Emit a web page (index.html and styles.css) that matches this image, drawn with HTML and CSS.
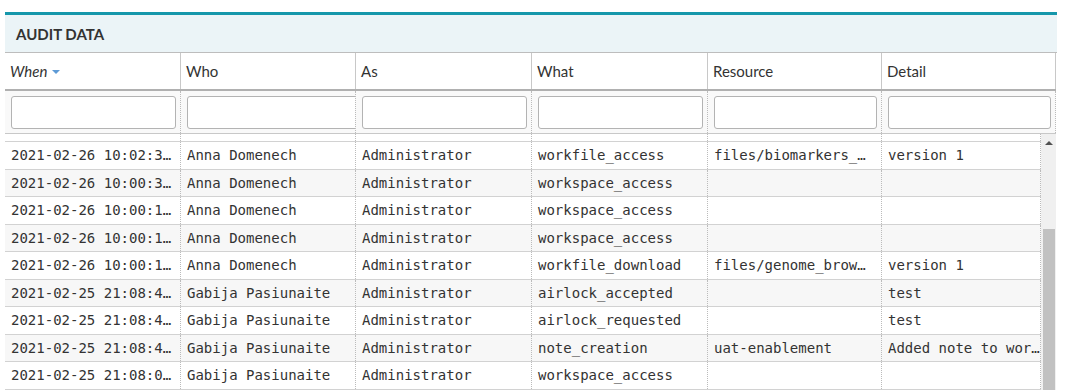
FILE: index.html
```html
<!DOCTYPE html>
<html>
<head>
<meta charset="utf-8">
<link rel="stylesheet" href="styles.css">
</head>
<body>
<div class="panel">
  <div class="title">AUDIT DATA</div>
  <div class="grid head">
    <div class="hcell"><span class="when">When</span><span class="caret"></span></div>
    <div class="hcell">Who</div>
    <div class="hcell">As</div>
    <div class="hcell">What</div>
    <div class="hcell">Resource</div>
    <div class="hcell">Detail</div>
  </div>
  <div class="grid filters">
    <div class="fcell"><input type="text" class="finput"></div>
    <div class="fcell wide"><input type="text" class="finput"></div>
    <div class="fcell"><input type="text" class="finput"></div>
    <div class="fcell"><input type="text" class="finput"></div>
    <div class="fcell"><input type="text" class="finput"></div>
    <div class="fcell"><input type="text" class="finput"></div>
  </div>
  <div class="body">
    <div class="rows">
      <div class="grid row partial"><div class="cell"></div><div class="cell"></div><div class="cell"></div><div class="cell"></div><div class="cell"></div><div class="cell"></div></div>
      <div class="grid row"><div class="cell">2021-02-26 10:02:3…</div><div class="cell">Anna Domenech</div><div class="cell">Administrator</div><div class="cell">workfile_access</div><div class="cell">files/biomarkers_…</div><div class="cell">version 1</div></div>
      <div class="grid row alt"><div class="cell">2021-02-26 10:00:3…</div><div class="cell">Anna Domenech</div><div class="cell">Administrator</div><div class="cell">workspace_access</div><div class="cell"></div><div class="cell"></div></div>
      <div class="grid row"><div class="cell">2021-02-26 10:00:1…</div><div class="cell">Anna Domenech</div><div class="cell">Administrator</div><div class="cell">workspace_access</div><div class="cell"></div><div class="cell"></div></div>
      <div class="grid row alt"><div class="cell">2021-02-26 10:00:1…</div><div class="cell">Anna Domenech</div><div class="cell">Administrator</div><div class="cell">workspace_access</div><div class="cell"></div><div class="cell"></div></div>
      <div class="grid row"><div class="cell">2021-02-26 10:00:1…</div><div class="cell">Anna Domenech</div><div class="cell">Administrator</div><div class="cell">workfile_download</div><div class="cell">files/genome_brow…</div><div class="cell">version 1</div></div>
      <div class="grid row alt"><div class="cell">2021-02-25 21:08:4…</div><div class="cell">Gabija Pasiunaite</div><div class="cell">Administrator</div><div class="cell">airlock_accepted</div><div class="cell"></div><div class="cell">test</div></div>
      <div class="grid row"><div class="cell">2021-02-25 21:08:4…</div><div class="cell">Gabija Pasiunaite</div><div class="cell">Administrator</div><div class="cell">airlock_requested</div><div class="cell"></div><div class="cell">test</div></div>
      <div class="grid row alt"><div class="cell">2021-02-25 21:08:4…</div><div class="cell">Gabija Pasiunaite</div><div class="cell">Administrator</div><div class="cell">note_creation</div><div class="cell">uat-enablement</div><div class="cell">Added note to wor…</div></div>
      <div class="grid row"><div class="cell">2021-02-25 21:08:0…</div><div class="cell">Gabija Pasiunaite</div><div class="cell">Administrator</div><div class="cell">workspace_access</div><div class="cell"></div><div class="cell"></div></div>
    </div>
    <div class="scrollbar">
      <div class="arrow"></div>
      <div class="thumb"></div>
    </div>
  </div>
</div>
</body>
</html>
```
FILE: styles.css
```css
html, body {
  margin: 0;
  padding: 0;
  background: #fff;
  overflow: hidden;
  height: 390px;
}
.panel {
  margin: 12px 0 0 5px;
  width: 1052px;
  font-family: Lato, "Open Sans", sans-serif;
  color: #333;
}
.title {
  border-top: 3px solid #1597ab;
  background: #ebf4f7;
  box-sizing: border-box;
  height: 41px;
  display: flex;
  align-items: center;
  padding-left: 11px;
  font-weight: bold;
  font-size: 15px;
  color: #333;
  border-bottom: 1px solid #bdbdbd;
}
.grid {
  display: grid;
  grid-template-columns: 176px 175px 176px 176px 174px 1fr;
}
.head {
  width: 1051px;
  height: 36px;
  border-bottom: 2px solid #b0b0b0;
}
.hcell {
  border-right: 1px solid #c8c8c8;
  display: flex;
  align-items: center;
  padding-left: 5px;
  padding-bottom: 1px;
  font-size: 15px;
  color: #333;
}
.when {
  font-style: italic;
}
.caret {
  width: 0;
  height: 0;
  border-left: 4px solid transparent;
  border-right: 4px solid transparent;
  border-top: 4px solid #5d9ad6;
  margin-left: 5px;
  margin-top: 2px;
}
.filters {
  width: 1051px;
  background: #f9f9f9;
  border-bottom: 1px solid #c8c8c8;
}
.fcell {
  padding: 5px 4px 4px 6px;
  border-right: 1px dotted #bbb;
  overflow: hidden;
}
.fcell.wide {
  padding-right: 0;
}
.finput {
  display: block;
  width: 100%;
  height: 33px;
  box-sizing: border-box;
  border: 1px solid #b3b3b3;
  border-radius: 3px;
  background: #fff;
  margin: 0;
  padding: 0 4px;
}
.fcell.wide .finput {
  width: calc(100% + 4px);
}
.body {
  display: flex;
  width: 1051px;
  height: 256px;
  overflow: hidden;
}
.rows {
  flex: 1;
  overflow: hidden;
  font-family: "DejaVu Sans Mono", monospace;
  font-size: 14px;
  color: #333;
}
.row {
  height: 27.5px;
  box-sizing: border-box;
  border-bottom: 1px solid #d2d2d2;
  background: #fff;
}
.row.alt {
  background: #f7f7f7;
}
.row.partial {
  height: 8px;
}
.cell {
  border-right: 1px dotted #bbb;
  padding: 0 6px;
  white-space: nowrap;
  overflow: hidden;
  line-height: 26.5px;
}
.scrollbar {
  width: 15px;
  background: #f0f0f0;
  display: flex;
  flex-direction: column;
  align-items: center;
}
.arrow {
  width: 0;
  height: 0;
  border-left: 4px solid transparent;
  border-right: 4px solid transparent;
  border-bottom: 4px solid #505050;
  margin-top: 7px;
}
.thumb {
  width: 12px;
  height: 200px;
  background: #c1c1c1;
  margin-top: 84px;
}
```
